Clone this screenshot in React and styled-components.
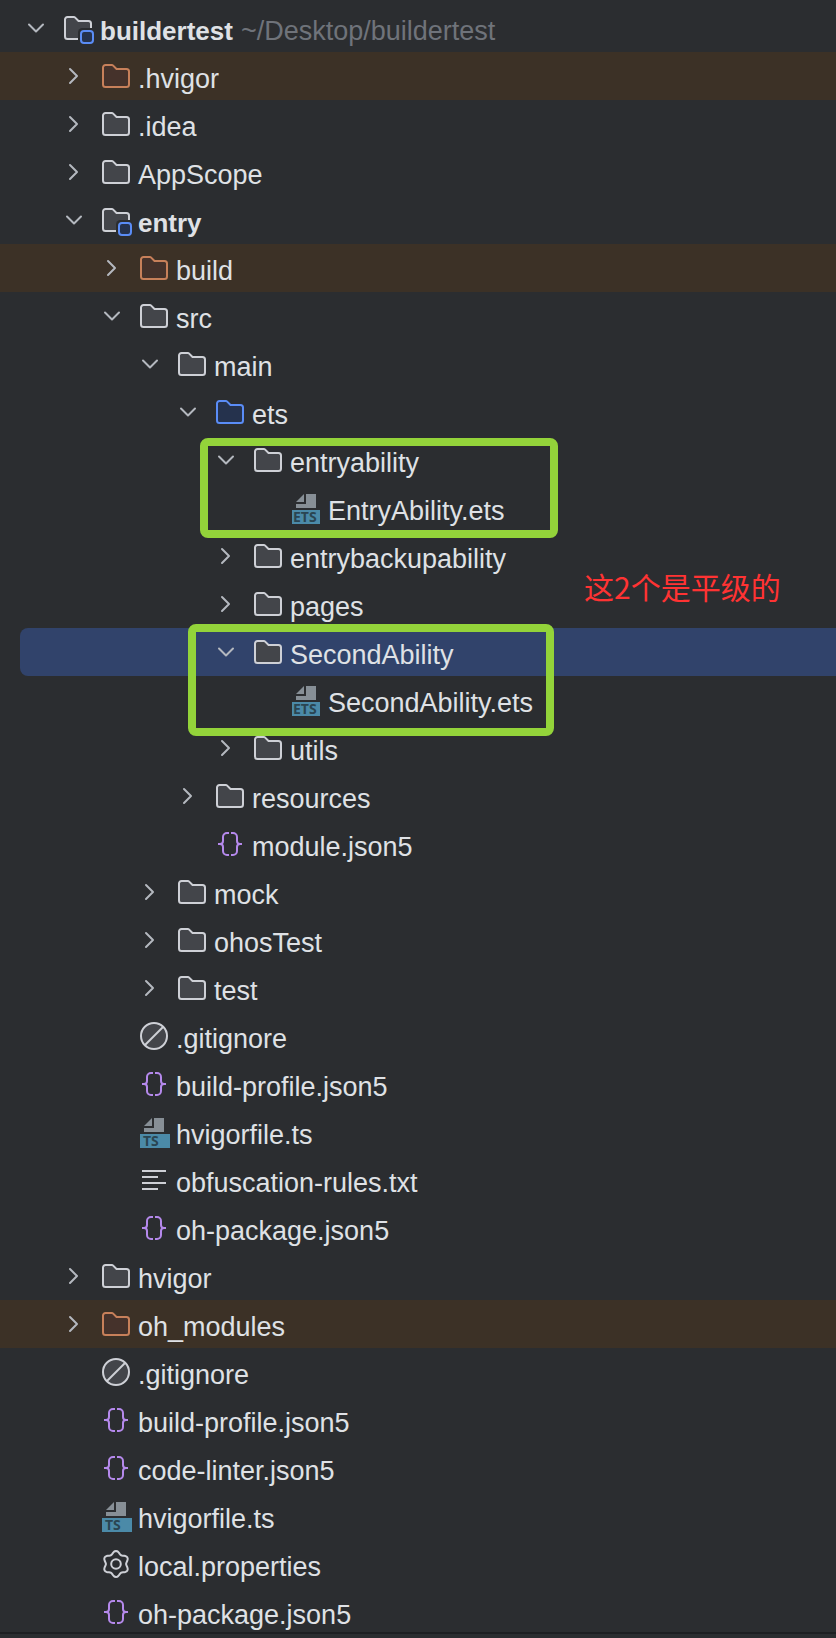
import React, { useState } from 'react';
import styled, { createGlobalStyle, css } from 'styled-components';

const GlobalStyle = createGlobalStyle`
  body {
    margin: 0;
    background: #2b2d30;
  }
`

const ROW_HEIGHT = 48;
const INDENT = 38;
const GUTTER = 20;

const Panel = styled.main`
  position: relative;
  box-sizing: border-box;
  min-height: 100vh;
  padding-top: 4px;
  overflow: hidden;
  background: #2b2d30;
  color: #dfe1e5;
  font-family: 'Liberation Sans', Arial, sans-serif;
  font-size: 27px;
`

const Tree = styled.ul`
  list-style: none;
  margin: 0;
  padding: 0;
`

const excluded = css`
  background: #3c3126;
`

const selected = css`
  margin-left: ${GUTTER}px;
  padding-left: ${props => props.$depth * INDENT}px;
  border-radius: 8px 0 0 8px;
  background: #31436b;
`

const Row = styled.li`
  display: flex;
  align-items: center;
  height: ${ROW_HEIGHT}px;
  padding-left: ${props => GUTTER + props.$depth * INDENT}px;
  white-space: nowrap;
  ${props => props.$state === 'excluded' && excluded}
  ${props => props.$state === 'selected' && selected}
`

const Toggle = styled.button`
  display: block;
  width: 32px;
  height: 32px;
  margin-right: 10px;
  padding: 0;
  border: 0;
  background: none;
  color: #b4b8bf;
  cursor: pointer;
`

const ToggleSpace = styled.span`
  width: 32px;
  margin-right: 10px;
`

const Svg = styled.svg`
  display: block;
  flex: none;
  width: 32px;
  height: 32px;
  overflow: visible;
  fill: none;
`

const Label = styled.span`
  padding-top: 6px;
  padding-left: 6px;
  line-height: 32px;
`

const ModuleLabel = styled(Label)`
  font-size: 26px;
  font-weight: bold;
`

const Path = styled.span`
  padding-top: 6px;
  padding-left: 8px;
  line-height: 32px;
  color: #6f737a;
`

const BottomLine = styled.hr`
  position: absolute;
  right: 0;
  bottom: 4px;
  left: 0;
  height: 2px;
  margin: 0;
  border: 0;
  background: #1e1f22;
`

// frames drawn over the tree
const Frame = styled.div`
  position: absolute;
  top: ${props => props.$top}px;
  left: ${props => props.$left}px;
  box-sizing: border-box;
  width: ${props => props.$width}px;
  height: ${props => props.$height}px;
  border: 8px solid #93d33a;
  border-radius: 8px;
  pointer-events: none;
`

const Note = styled.p`
  position: absolute;
  top: 566px;
  left: 584px;
  margin: 0;
  color: #ff3333;
  font-family: 'Noto Sans CJK SC', sans-serif;
  font-size: 30px;
  line-height: 40px;
  white-space: nowrap;
`

const Chevron = ({ open }) => (
  <Svg viewBox="0 0 32 32" stroke="currentColor" strokeWidth="2" strokeLinecap="round" strokeLinejoin="round" aria-hidden="true">
    <path d={open ? 'M9 12.5L16 19.5L23 12.5' : 'M12 9L19 16L12 23'} />
  </Svg>
);

const FOLDER = 'M5.5 5H11.8a2 2 0 0 1 1.4.6L16.5 9H26.5a2.5 2.5 0 0 1 2.5 2.5V24.5a2.5 2.5 0 0 1-2.5 2.5H5.5a2.5 2.5 0 0 1-2.5-2.5V7.5a2.5 2.5 0 0 1 2.5-2.5z';

const folderColors = {
  folder: { fill: '#43454a', stroke: '#ced0d6' },
  excludedFolder: { fill: '#45322b', stroke: '#c7805a' },
  sourceFolder: { fill: '#25324d', stroke: '#5a8cf6' },
};

const FolderIcon = ({ kind }) => (
  <Svg viewBox="0 0 32 32" aria-hidden="true">
    <path d={FOLDER} strokeWidth="2" {...folderColors[kind]} />
  </Svg>
);

const ModuleIcon = () => (
  <Svg viewBox="0 0 32 32" aria-hidden="true">
    <path d={FOLDER} strokeWidth="2" {...folderColors.folder} />
    <path d="M16 32V20.5a4.5 4.5 0 0 1 4.5-4.5H32V32z" fill="#2b2d30" />
    <rect x="19" y="19" width="12" height="12" rx="3" strokeWidth="2" {...folderColors.sourceFolder} />
  </Svg>
);

const ScriptIcon = ({ text, wide }) => (
  <Svg viewBox="0 0 32 32" aria-hidden="true">
    <path d="M6 10L14 2V10zM16 2H26V16H6V12H16z" fill="#878f96" />
    <rect x="2" y="18" width={wide ? 30 : 28} height="14" fill="#4b8aa8" />
    <text x={wide ? 5 : 3} y="30" fill="#2a4552" fontFamily="Noto Sans, sans-serif" fontSize="14" fontWeight="700">{text}</text>
  </Svg>
);

const JsonIcon = () => (
  <Svg viewBox="0 0 32 32" stroke="#b589ec" strokeWidth="2" aria-hidden="true">
    <path d="M15 5H13a4 4 0 0 0-4 4V13a3 3 0 0 1-3 3H4H6a3 3 0 0 1 3 3v4a4 4 0 0 0 4 4H15" />
    <path d="M17 5H19a4 4 0 0 1 4 4V13a3 3 0 0 0 3 3H28H26a3 3 0 0 0-3 3v4a4 4 0 0 1-4 4H17" />
  </Svg>
);

const IgnoreIcon = () => (
  <Svg viewBox="0 0 32 32" stroke="#ced0d6" strokeWidth="2" aria-hidden="true">
    <circle cx="16" cy="16" r="13" fill="#43454a" />
    <path d="M7 25L25 7" />
  </Svg>
);

const TextIcon = () => (
  <Svg viewBox="0 0 32 32" stroke="#ced0d6" strokeWidth="2" aria-hidden="true">
    <path d="M4 7H28M4 13H20M4 19H28M4 25H20" />
  </Svg>
);

// six soft lobes round the centre, first one on top
const gearPoints = Array.from({ length: 72 }, (_, i) => {
  const a = i * Math.PI / 36;
  const r = 11.6 + 1.5 * Math.cos(6 * a);
  return `${(16 + r * Math.sin(a)).toFixed(2)},${(16 - r * Math.cos(a)).toFixed(2)}`;
}).join(' ');

const GearIcon = () => (
  <Svg viewBox="0 0 32 32" stroke="#ced0d6" strokeWidth="2" strokeLinejoin="round" aria-hidden="true">
    <polygon points={gearPoints} />
    <circle cx="16" cy="16" r="4.8" />
  </Svg>
);

const icons = {
  folder: <FolderIcon kind="folder" />,
  excludedFolder: <FolderIcon kind="excludedFolder" />,
  sourceFolder: <FolderIcon kind="sourceFolder" />,
  module: <ModuleIcon />,
  ets: <ScriptIcon text="ETS" />,
  ts: <ScriptIcon text="TS" wide />,
  json: <JsonIcon />,
  ignore: <IgnoreIcon />,
  text: <TextIcon />,
  gear: <GearIcon />,
};

const items = [
  { depth: 0, icon: 'module', name: 'buildertest', path: '~/Desktop/buildertest', open: true },
  { depth: 1, icon: 'excludedFolder', name: '.hvigor', open: false, state: 'excluded' },
  { depth: 1, icon: 'folder', name: '.idea', open: false },
  { depth: 1, icon: 'folder', name: 'AppScope', open: false },
  { depth: 1, icon: 'module', name: 'entry', open: true },
  { depth: 2, icon: 'excludedFolder', name: 'build', open: false, state: 'excluded' },
  { depth: 2, icon: 'folder', name: 'src', open: true },
  { depth: 3, icon: 'folder', name: 'main', open: true },
  { depth: 4, icon: 'sourceFolder', name: 'ets', open: true },
  { depth: 5, icon: 'folder', name: 'entryability', open: true },
  { depth: 6, icon: 'ets', name: 'EntryAbility.ets' },
  { depth: 5, icon: 'folder', name: 'entrybackupability', open: false },
  { depth: 5, icon: 'folder', name: 'pages', open: false },
  { depth: 5, icon: 'folder', name: 'SecondAbility', open: true, state: 'selected' },
  { depth: 6, icon: 'ets', name: 'SecondAbility.ets' },
  { depth: 5, icon: 'folder', name: 'utils', open: false },
  { depth: 4, icon: 'folder', name: 'resources', open: false },
  { depth: 4, icon: 'json', name: 'module.json5' },
  { depth: 3, icon: 'folder', name: 'mock', open: false },
  { depth: 3, icon: 'folder', name: 'ohosTest', open: false },
  { depth: 3, icon: 'folder', name: 'test', open: false },
  { depth: 2, icon: 'ignore', name: '.gitignore' },
  { depth: 2, icon: 'json', name: 'build-profile.json5' },
  { depth: 2, icon: 'ts', name: 'hvigorfile.ts' },
  { depth: 2, icon: 'text', name: 'obfuscation-rules.txt' },
  { depth: 2, icon: 'json', name: 'oh-package.json5' },
  { depth: 1, icon: 'folder', name: 'hvigor', open: false },
  { depth: 1, icon: 'excludedFolder', name: 'oh_modules', open: false, state: 'excluded' },
  { depth: 1, icon: 'ignore', name: '.gitignore' },
  { depth: 1, icon: 'json', name: 'build-profile.json5' },
  { depth: 1, icon: 'json', name: 'code-linter.json5' },
  { depth: 1, icon: 'ts', name: 'hvigorfile.ts' },
  { depth: 1, icon: 'gear', name: 'local.properties' },
  { depth: 1, icon: 'json', name: 'oh-package.json5' },
];

// drops everything nested under a closed folder
const getVisible = (items, opened) => {
  let closedDepth = Infinity;
  return items.map((item, i) => ({ ...item, i })).filter((item) => {
    if (item.depth > closedDepth) {
      return false;
    }
    closedDepth = item.open !== undefined && !opened[item.i] ? item.depth : Infinity;
    return true;
  });
}

const App = () => {
  const [opened, setOpened] = useState(items.map((x) => x.open));

  const onToggle = (i) => () => {
    setOpened(opened.map((x, k) => k === i ? !x : x));
  };

  return (
    <Panel>
      <GlobalStyle />
      <Tree role="tree" aria-label="Project">
        {getVisible(items, opened).map(({ i, depth, icon, name, path, open, state }) => {
          const Name = icon === 'module' ? ModuleLabel : Label;
          return (
            <Row key={i} role="treeitem" aria-level={depth + 1} aria-selected={state === 'selected'} $depth={depth} $state={state}>
              {open === undefined
                ? <ToggleSpace />
                : <Toggle type="button" aria-label={`Toggle ${name}`} aria-expanded={opened[i]} onClick={onToggle(i)}>
                    <Chevron open={opened[i]} />
                  </Toggle>
              }
              {icons[icon]}
              <Name>{name}</Name>
              {path && <Path>{path}</Path>}
            </Row>
          );
        })}
      </Tree>
      <Frame $top={438} $left={200} $width={358} $height={100} />
      <Frame $top={624} $left={188} $width={366} $height={112} />
      <Note lang="zh">这2个是平级的</Note>
      <BottomLine />
    </Panel>
  );
};

export default App;
